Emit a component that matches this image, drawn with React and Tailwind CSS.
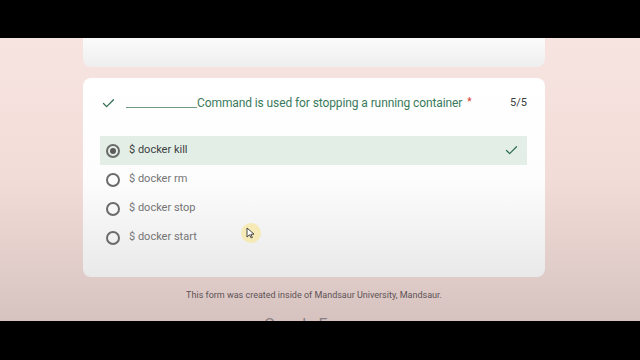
import { Check } from "lucide-react";

const options = ["$ docker kill", "$ docker rm", "$ docker stop", "$ docker start"];

export default function App() {
  return (
    <div className="w-[640px] h-[360px] flex flex-col bg-black overflow-hidden" style={{ fontFamily: "Roboto, 'Liberation Sans', sans-serif" }}>
      <div className="h-[38px] bg-black shrink-0" />

      <div className="h-[283px] shrink-0 bg-gradient-to-b from-[#f7e4e0] via-[#f2dcd8] to-[#d6c3bf] flex flex-col pl-[83px] overflow-hidden">
        <div className="w-[462px] h-[29px] shrink-0 rounded-b-lg bg-gradient-to-b from-[#fbfbfb] to-[#efeeee]" />

        <div className="w-[462px] h-[199px] mt-[11px] shrink-0 rounded-lg bg-gradient-to-b from-[#ffffff] via-[#fdfdfd] to-[#e9e9e9] px-[17px] pt-[16px] flex flex-col">
          <div className="flex items-center h-[18px]">
            <Check className="w-[15px] h-[15px] text-[#2f6f50] ml-[1px]" strokeWidth={2} />
            <div className="ml-[10px] w-[71px] h-[10px] border-b border-[#6f9b85]" />
            <span className="text-[12px] text-[#3a7a5c] tracking-[-0.1px]">Command is used for stopping a running container</span>
            <span className="text-[10px] text-[#d93025] ml-[5px] -mt-[4px]">*</span>
            <span className="ml-auto mr-[1px] text-[11px] text-[#3c4043]">5/5</span>
          </div>

          <div className="mt-[24px] flex flex-col">
            {options.map((o, i) => (
              <div
                key={o}
                className={
                  i === 0
                    ? "h-[29px] flex items-center bg-[#e3efe6] px-[6px] w-[427px]"
                    : "h-[29px] flex items-center px-[6px] w-[427px]"
                }
              >
                <div className="w-[14px] h-[14px] rounded-full border-2 border-[#6b6b6b] flex items-center justify-center">
                  {i === 0 && <div className="w-[6px] h-[6px] rounded-full bg-[#5a5a5a]" />}
                </div>
                <span className={i === 0 ? "ml-[9px] text-[11px] text-[#3c4043]" : "ml-[9px] text-[11px] text-[#757575]"}>{o}</span>
                {i === 0 && <Check className="ml-auto mr-[2px] w-[15px] h-[15px] text-[#2f6f50]" strokeWidth={2} />}
                {i === 3 && (
                  <div className="ml-[44px] mt-[-9px] w-[20px] h-[20px] rounded-full bg-[#f6e9a8]/80 flex items-center justify-center">
                    <svg width="9" height="12" viewBox="0 0 9 12">
                      <path d="M1 1 L1 10 L3.5 7.8 L5.2 11 L6.4 10.4 L4.8 7.3 L8 7.1 Z" fill="#fff" stroke="#333" strokeWidth="0.9" />
                    </svg>
                  </div>
                )}
              </div>
            ))}
          </div>
        </div>

        <div className="w-[462px] mt-[12px] text-[9px] text-[#5e5257] text-center">This form was created inside of Mandsaur University, Mandsaur.</div>
        <div className="w-[462px] mt-[10px] text-[16px] text-[#8a7f80] text-center">Google Forms</div>
      </div>

      <div className="flex-1 bg-black" />
    </div>
  );
}
